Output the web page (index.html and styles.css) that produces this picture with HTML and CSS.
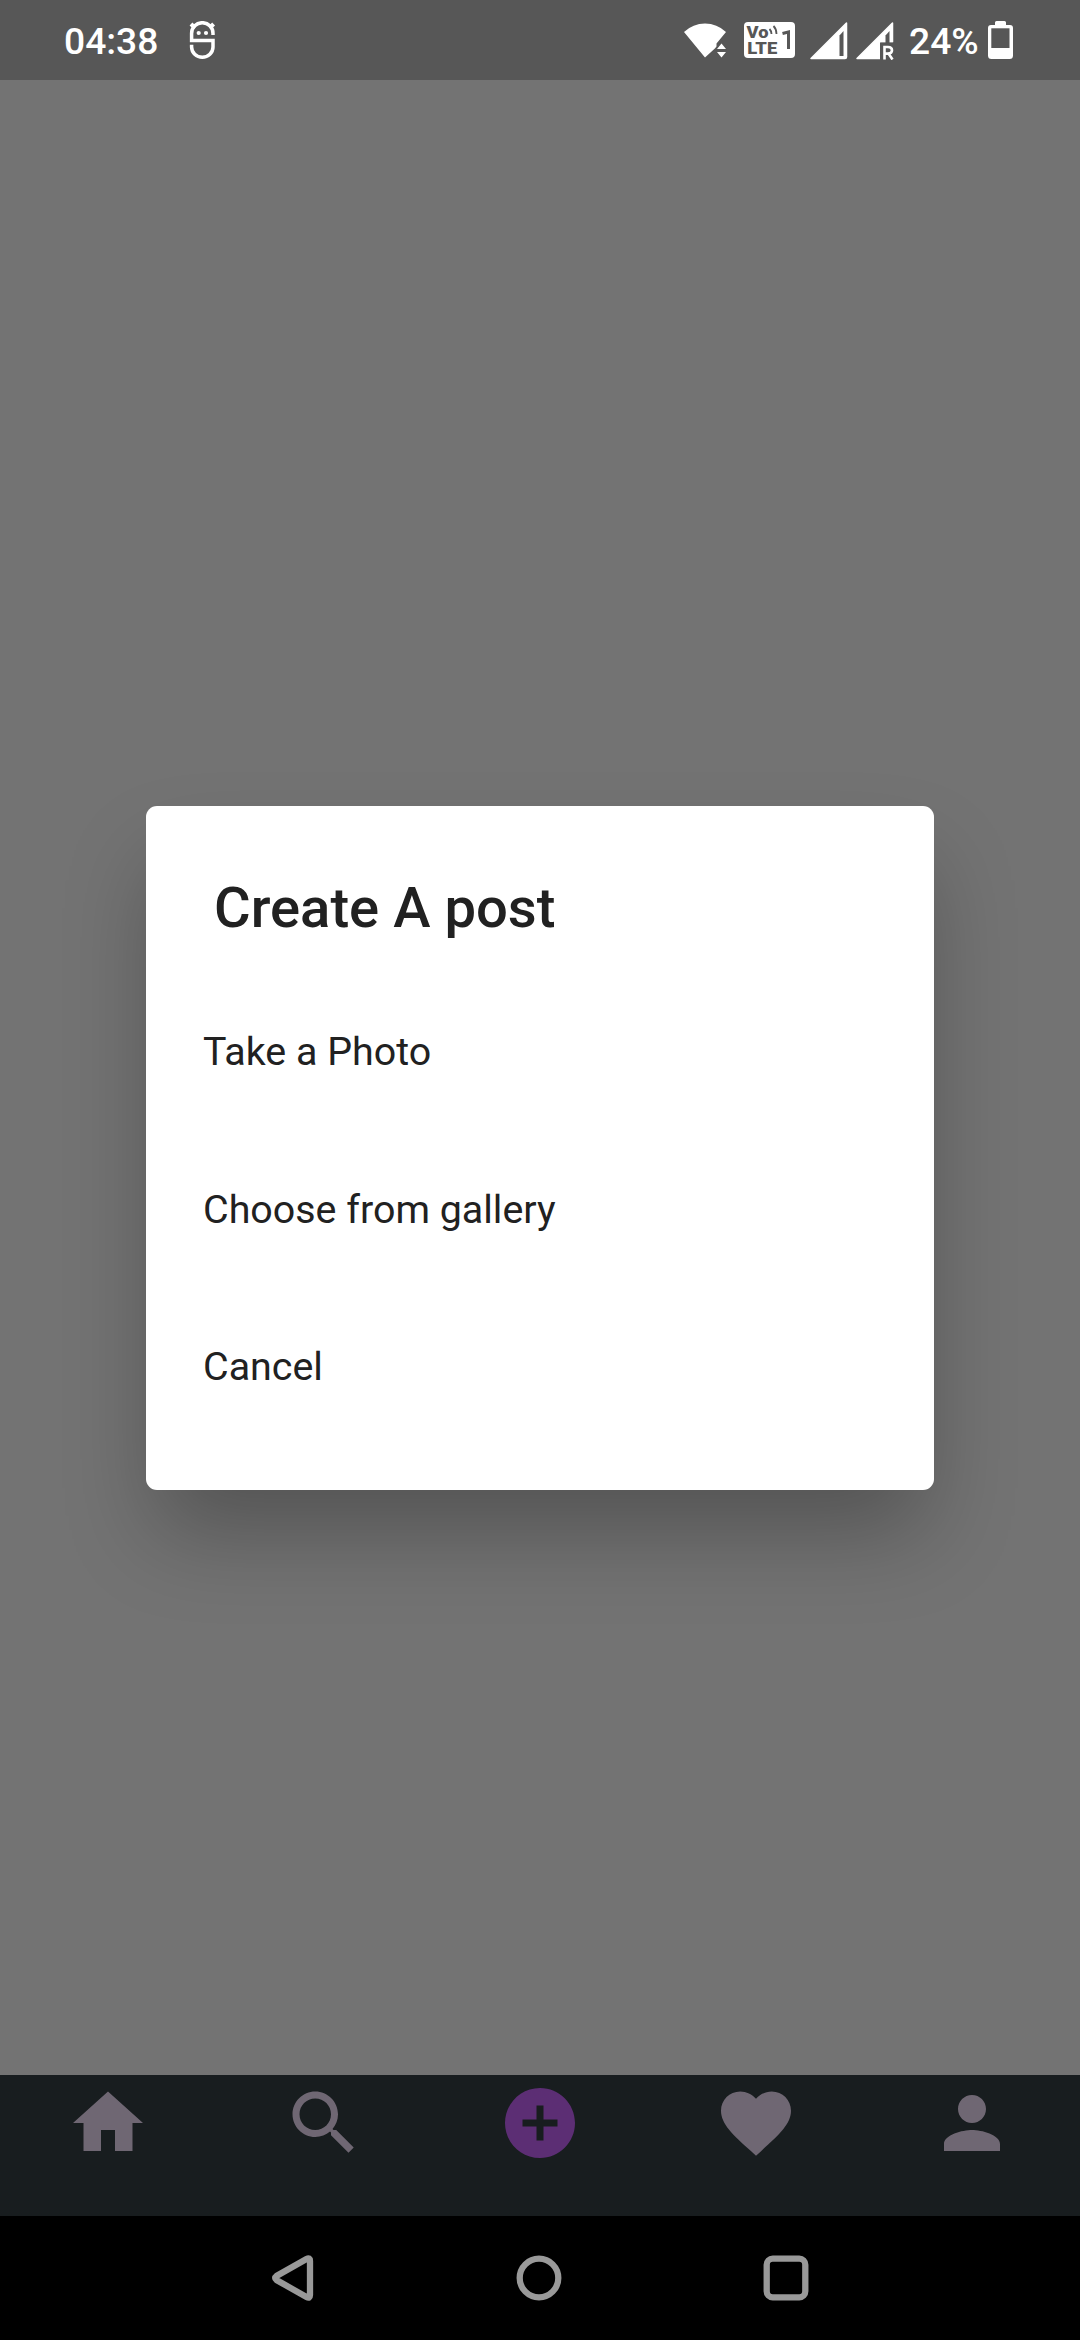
FILE: index.html
```html
<!DOCTYPE html>
<html lang="en">
<head>
<meta charset="utf-8">
<title>Create A post</title>
<link rel="stylesheet" href="styles.css">
</head>
<body>
<div class="screen">
  <header class="status">
    <span class="clock">04:38</span>
    <svg class="notification" width="28" height="38" viewBox="0 0 28 38" fill="none" stroke="#fff" stroke-width="3.500">
      <path d="M25 14v-1.600a10.700 10.700 0 0 0-21.400 0v7.100h21.400v6.500a10.700 10.200 0 0 1-21.400 0v-2.200"/>
      <path d="M3 3l4 4M25.600 3l-4 4" stroke-width="4"/>
      <circle cx="10.700" cy="12" r="2.100" fill="#fff" stroke="none"/>
      <circle cx="18" cy="12" r="2.100" fill="#fff" stroke="none"/>
    </svg>
    <div class="indicators">
      <svg class="wifi" width="42" height="36" viewBox="0 0 42 36" fill="#fff">
        <path d="M0 9Q9 .5 21 .5T42 9L32.500 20.500V24L21 34.500Z"/>
        <path d="M38 17.500l6 8H31z" fill="#575757"/>
        <path d="M37.500 20.500l4.500 5.500h-9zM33 29h9l-4.500 5.500z"/>
      </svg>
      <svg class="volte" width="51" height="36" viewBox="0 0 51 36">
        <rect width="51" height="36" rx="4" fill="#fff"/>
        <g class="volte-text">
          <text x="2.500" y="15.700" textLength="22" lengthAdjust="spacingAndGlyphs">Vo</text>
          <text x="3.200" y="31.700" textLength="30" lengthAdjust="spacingAndGlyphs">LTE</text>
        </g>
        <path d="M25.500 7q2 2 2 5M29.500 4q3 3 3 8" fill="none" stroke="#575757" stroke-width="1.800"/>
        <path d="M38.500 11.500l6-1.500v17" fill="none" stroke="#575757" stroke-width="3"/>
      </svg>
      <svg class="signal" width="38" height="38" viewBox="0 0 38 38">
        <path d="M1 36.500L36.500 1v34q0 1.500-1.500 1.500z" fill="#fff" stroke="#fff" stroke-width="1.500" stroke-linejoin="round"/>
        <path d="M29.500 13.500l4-4.500v25h-4z" fill="#575757"/>
      </svg>
      <svg class="signal" width="38" height="38" viewBox="0 0 38 38">
        <path d="M1 36.500L36.500 1v19H24v16.500z" fill="#fff" stroke="#fff" stroke-width="1.500" stroke-linejoin="round"/>
        <path d="M29.500 13.500l4-4.500v12h-4z" fill="#575757"/>
        <path d="M24 20.500h14V38H24z" fill="#575757"/>
        <path d="M28.500 37.500V25h3.500q4 0 4 3.300t-4 3.300h-3.500M32.500 31.600l4 5.900" fill="none" stroke="#fff" stroke-width="2.600"/>
      </svg>
      <span class="percent">24%</span>
      <svg class="battery" width="25" height="38" viewBox="0 0 25 38">
        <path d="M7 4V1.500Q7 0 8.500 0h8Q18 0 18 1.500V4h4q3 0 3 3v27.500q0 3.500-3.500 3.500h-18Q0 38 0 34.500V7q0-3 3-3z" fill="#fff"/>
        <path d="M3.300 7.300h18.200V27H3.300z" fill="#575757"/>
      </svg>
    </div>
  </header>

  <main class="backdrop">
    <section class="dialog" role="dialog" aria-labelledby="dialog-title">
      <h1 class="dialog-title" id="dialog-title">Create A post</h1>
      <ul class="options">
        <li class="option">Take a Photo</li>
        <li class="option">Choose from gallery</li>
        <li class="option">Cancel</li>
      </ul>
    </section>
  </main>

  <nav class="tabs">
    <div class="tab"><svg class="tab-icon" viewBox="0 0 24 24"><path d="M10 20v-6h4v6h5v-8h3L12 3 2 12h3v8z"/></svg></div>
    <div class="tab"><svg class="tab-icon" viewBox="0 0 24 24"><path d="M15.500 14h-.79l-.28-.27C15.410 12.590 16 11.110 16 9.500 16 5.910 13.090 3 9.500 3S3 5.910 3 9.500 5.910 16 9.500 16c1.610 0 3.090-.59 4.230-1.570l.27.28v.79l5 4.990L20.490 19l-4.990-5zm-6 0C7.010 14 5 11.990 5 9.500S7.010 5 9.500 5 14 7.010 14 9.500 11.990 14 9.500 14z"/></svg></div>
    <div class="tab"><svg class="tab-icon active" viewBox="0 0 24 24"><path d="M12 2C6.480 2 2 6.480 2 12s4.480 10 10 10 10-4.480 10-10S17.520 2 12 2zm5 11h-4v4h-2v-4H7v-2h4V7h2v4h4v2z"/></svg></div>
    <div class="tab"><svg class="tab-icon" viewBox="0 0 24 24"><path d="M12 21.350l-1.450-1.320C5.400 15.360 2 12.280 2 8.500 2 5.420 4.420 3 7.500 3c1.740 0 3.410.81 4.500 2.090C13.090 3.810 14.760 3 16.500 3 19.580 3 22 5.420 22 8.500c0 3.780-3.400 6.860-8.550 11.540L12 21.350z"/></svg></div>
    <div class="tab"><svg class="tab-icon" viewBox="0 0 24 24"><path d="M12 12c2.210 0 4-1.790 4-4s-1.790-4-4-4-4 1.790-4 4 1.790 4 4 4zm0 2c-2.670 0-8 1.340-8 4v2h16v-2c0-2.660-5.330-4-8-4z"/></svg></div>
  </nav>

  <footer class="system">
    <svg width="54" height="54" viewBox="0 0 54 54"><path d="M41.500 7.900Q45 6 45 10v34q0 4-3.500 2.100L11.500 29Q8.800 27 11.500 25z"/></svg>
    <svg width="54" height="54" viewBox="0 0 54 54"><circle cx="27" cy="27" r="19.300"/></svg>
    <svg width="54" height="54" viewBox="0 0 54 54"><rect x="7.700" y="7.700" width="38.600" height="38.600" rx="6"/></svg>
  </footer>
</div>
</body>
</html>
```
FILE: styles.css
```css
* { box-sizing: border-box; }

body {
  margin: 0;
  font-family: Roboto, "Liberation Sans", sans-serif;
  background: #000;
}

svg { display: block; flex: none; }

.screen {
  width: 1080px;
  height: 2340px;
  display: flex;
  flex-direction: column;
  background: #737373;
  overflow: hidden;
}

.status {
  height: 80px;
  flex: none;
  display: flex;
  align-items: flex-start;
  padding: 0 67px 0 64px;
  background: #575757;
  color: #fff;
  font-size: 37.200px;
  font-weight: 500;
  line-height: 82px;
}

.clock { width: 124px; }

.notification { margin-top: 21px; }

.indicators {
  display: flex;
  margin-left: auto;
}

.wifi { margin: 23px 18px 0 0; overflow: visible; }
.volte { margin: 22px 15px 0 0; }
.signal { margin: 22px 8px 0 0; }
.percent { width: 67px; margin: 0 12px 0 7px; white-space: nowrap; }
.battery { margin-top: 21px; }

.signal + .percent { margin-left: 7px; }

.volte-text {
  font-size: 17px;
  font-weight: 900;
  fill: #575757;
}

.backdrop {
  flex: 1;
  display: flex;
  flex-direction: column;
  align-items: center;
  padding-top: 726px;
}

.dialog {
  width: 788px;
  height: 684px;
  padding: 69px 57px 0;
  border-radius: 11px;
  background: #fff;
  color: #212121;
  box-shadow: 0 50px 90px -10px rgba(0, 0, 0, .28);
}

.dialog-title {
  margin: 0 0 32px;
  padding-left: 11px;
  font-size: 56.200px;
  font-weight: 500;
  line-height: 66px;
}

.options {
  margin: 0;
  padding: 0;
  list-style: none;
  font-size: 39.400px;
}

.option {
  height: 157.500px;
  line-height: 157px;
}

.tabs {
  height: 141px;
  flex: none;
  display: grid;
  grid-template-columns: repeat(5, 1fr);
  justify-items: center;
  padding-top: 5.500px;
  background: #181d1f;
}

.tab-icon {
  width: 84px;
  height: 84px;
  fill: #6f6773;
}

.tab-icon.active { fill: #5c2e74; }

.system {
  height: 124px;
  flex: none;
  display: flex;
  justify-content: center;
  gap: 193px;
  padding: 35px 2px 0 0;
  background: #000;
}

.system svg {
  fill: none;
  stroke: #999;
  stroke-width: 6.300;
}
```
